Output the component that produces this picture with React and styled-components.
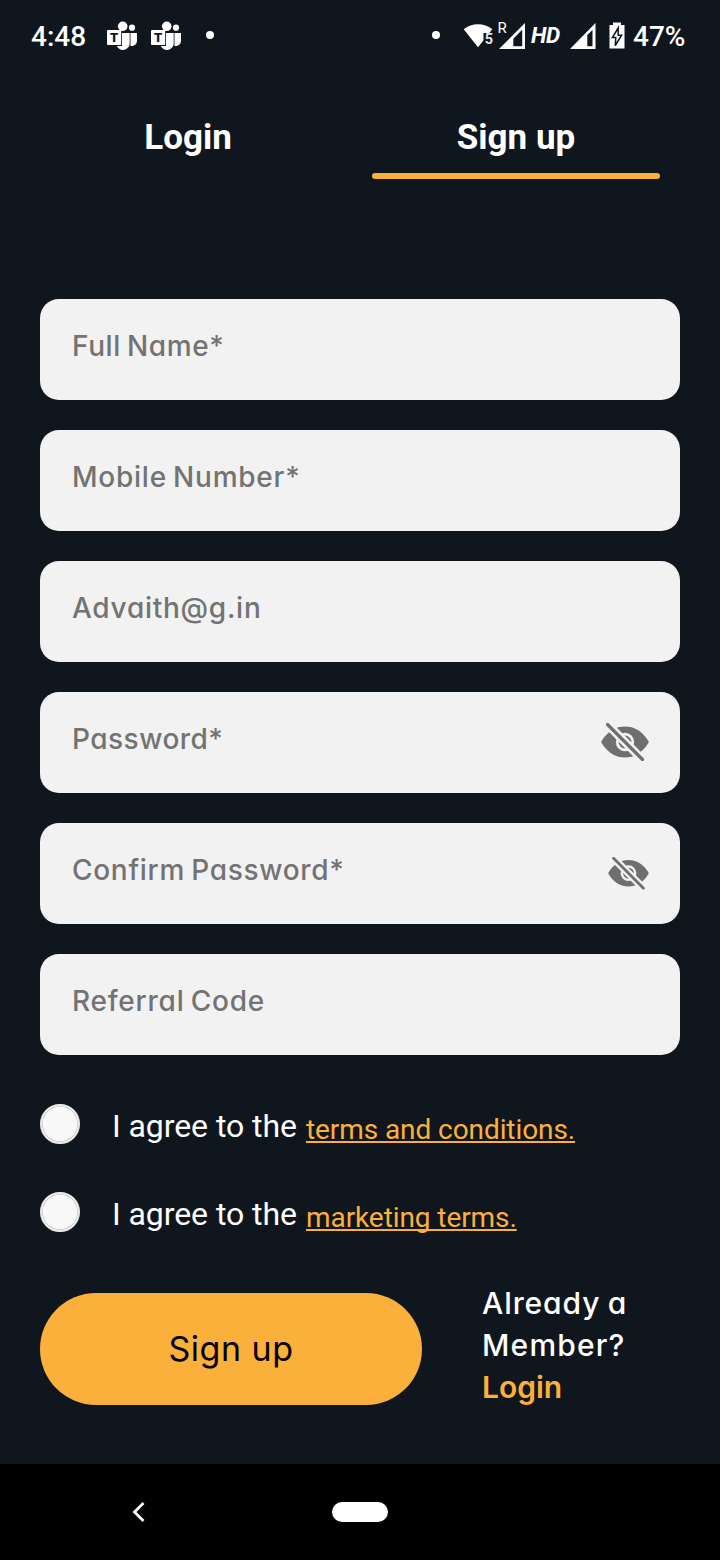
import React from 'react';
import styled, { createGlobalStyle } from 'styled-components';

const GlobalStyle = createGlobalStyle`
  * {
    box-sizing: border-box;
  }
  body {
    margin: 0;
    background: #0f161d;
  }
`;

const Screen = styled.div`
  width: 720px;
  height: 1560px;
  display: flex;
  flex-direction: column;
  background: #0f161d;
  color: #ffffff;
  font-family: Roboto, 'Liberation Sans', sans-serif;
  overflow: hidden;
`;

const StatusBar = styled.header`
  height: 72px;
  display: flex;
  align-items: center;
  justify-content: space-between;
  padding: 0 35px 0 31px;
  font-size: 28px;
  font-weight: 500;
  line-height: 36px;
`;

const StatusGroup = styled.div`
  display: flex;
  align-items: center;
`;

const StatusText = styled.span`
  white-space: nowrap;
  width: ${(p) => p.$width}px;
  margin-left: ${(p) => p.$gap || 0}px;
  padding-top: 2px;
`;

const StatusIcon = styled.svg`
  display: block;
  flex: none;
  overflow: visible;
  margin-left: ${(p) => p.$gap || 0}px;
`;

const Dot = styled.span`
  width: 8px;
  height: 8px;
  border-radius: 50%;
  background: #ffffff;
  margin: 0 0 2px ${(p) => p.$gap || 0}px;
`;

const HdText = styled.span`
  width: 30px;
  margin-left: 6px;
  padding-bottom: 2px;
  font-size: 22.5px;
  font-weight: 700;
  font-style: italic;
  letter-spacing: -0.4px;
  white-space: nowrap;
`;

const Tabs = styled.nav`
  display: flex;
  gap: 40px;
  padding: 46px 60px 0 44px;
`;

const Tab = styled.div`
  width: 288px;
  display: flex;
  flex-direction: column;
  align-items: center;
  font-size: 35px;
  font-weight: 700;
  line-height: 40px;
`;

const TabLine = styled.div`
  width: 288px;
  height: 6px;
  margin-top: 15px;
  border-radius: 3px;
  background: ${(p) => (p.$active ? '#fcb03c' : 'transparent')};
`;

const Form = styled.form`
  display: flex;
  flex-direction: column;
  gap: 30px;
  padding: 120px 40px 0;
  margin: 0;
`;

const Field = styled.div`
  height: 101px;
  border-radius: 19px;
  background: #f2f2f2;
  display: flex;
  align-items: center;
  justify-content: space-between;
  padding: 0 31px 0 32px;
`;

const Placeholder = styled.span`
  font-family: Inter, 'Open Sans', sans-serif;
  font-feature-settings: 'cv11';
  font-size: 28px;
  font-weight: 500;
  line-height: 36px;
  padding-bottom: 8px;
  letter-spacing: ${(p) => p.$spacing || 0}px;
  word-spacing: -2px;
  color: #737373;
  white-space: nowrap;
`;

const Agreements = styled.div`
  display: flex;
  flex-direction: column;
  gap: 48px;
  padding: 49px 40px 0;
`;

const Agreement = styled.div`
  height: 40px;
  display: flex;
  align-items: center;
`;

const Radio = styled.span`
  width: 40px;
  height: 40px;
  border-radius: 50%;
  border: 2px solid #e9ebeb;
  background: #f9f9f9;
  box-shadow: inset 0 0 0 0.6px #b4b6b7;
`;

const AgreeText = styled.span`
  width: 194px;
  margin-left: 32px;
  padding-top: 4px;
  font-size: 32px;
  line-height: 38px;
  letter-spacing: -0.07px;
  white-space: nowrap;
`;

const AgreeLink = styled.a`
  padding-top: 11px;
  font-size: 28px;
  line-height: 34px;
  color: #fcb03c;
  text-decoration: underline;
  text-decoration-thickness: 1.5px;
  text-underline-offset: 2px;
  text-decoration-skip-ink: none;
  letter-spacing: -0.08px;
  white-space: nowrap;
`;

const Actions = styled.div`
  display: flex;
  gap: 60px;
  padding: 61px 40px 0;
  font-family: Inter, 'Open Sans', sans-serif;
  font-feature-settings: 'cv11';
`;

const SubmitButton = styled.button`
  width: 382px;
  height: 112px;
  border: 0;
  border-radius: 56px;
  background: #fcb03c;
  color: #000000;
  font: inherit;
  font-feature-settings: inherit;
  font-size: 34px;
  letter-spacing: 0.5px;
  line-height: 40px;
  padding: 0;
`;

const Member = styled.div`
  display: flex;
  flex-direction: column;
  margin-top: -11px;
  font-size: 30px;
  line-height: 42px;
`;

const MemberLine = styled.span`
  letter-spacing: ${(p) => p.$spacing || 0}px;
  word-spacing: -1.5px;
  color: ${(p) => (p.$link ? '#fcb03c' : '#ffffff')};
  font-weight: ${(p) => (p.$link ? 600 : 500)};
  white-space: nowrap;
`;

const NavBar = styled.footer`
  height: 96px;
  margin-top: auto;
  background: #000000;
  display: flex;
  align-items: center;
  padding-left: 131px;
`;

const HomePill = styled.span`
  width: 56px;
  height: 20px;
  margin-left: 185px;
  border-radius: 10px;
  background: #ffffff;
`;

const TeamsIcon = ({ gap }) => (
  <StatusIcon $gap={gap} width="30" height="30" viewBox="0 0 30 30">
    <g fill="#ffffff">
      <circle cx="15.7" cy="5.3" r="4.8" />
      <circle cx="25" cy="6.7" r="3.1" />
      <path d="M15 12H22.7V22.5C22.7 26 19.5 29 16 29C13 29 10.8 27.3 9.8 25H15Z" />
      <path d="M23.5 12H30V19.5C30 22.5 28 25 24.5 25H23.5Z" />
      <rect x="0" y="9" width="14.2" height="15" rx="1" />
    </g>
    <text x="7" y="21" fill="#0f161d" fontSize="13" fontWeight="900" textAnchor="middle">
      T
    </text>
  </StatusIcon>
);

const WifiIcon = () => (
  <StatusIcon $gap={23} width="31" height="26" viewBox="0 0 31 26">
    <path d="M0.7 6.3C9 -0.4 21 -0.4 29.3 6.3L15 24.3Z" fill="#ffffff" />
    <path d="M20.5 10H31V26H20.5Z" fill="#0f161d" />
    <text x="25.8" y="21.2" fill="#e6e7e8" fontSize="14.5" fontWeight="700" textAnchor="middle">
      5
    </text>
  </StatusIcon>
);

const RoamingSignalIcon = () => (
  <StatusIcon $gap={1} width="30" height="28" viewBox="-3 0 30 28">
    <path
      d="M1 27H27V1ZM15.3 16.7V24.3H24.2V7.8Z"
      fill="#ffffff"
      fillRule="evenodd"
    />
    <text x="-0.6" y="11.3" fill="#ffffff" fontSize="15" fontWeight="400">
      R
    </text>
  </StatusIcon>
);

const SignalIcon = () => (
  <StatusIcon $gap={9} width="26" height="28" viewBox="0 0 26 28">
    <path
      d="M0 27H25.5V1ZM17.3 13V24.3H22.5V8Z"
      fill="#ffffff"
      fillRule="evenodd"
    />
  </StatusIcon>
);

const BatteryIcon = () => (
  <StatusIcon $gap={13} width="16" height="28" viewBox="0 0 16 28">
    <path d="M4 0.5H12V3H15.5V26.5H0.5V3H4Z" fill="#ffffff" />
    <path
      d="M9.2 6L3.4 15.5H6.8L6.2 23.5L12.6 13.2H9.2Z"
      fill="#ffffff"
      stroke="#0f161d"
      strokeWidth="1.5"
    />
  </StatusIcon>
);

const EyeSvg = styled.svg`
  display: block;
  flex: none;
  margin-bottom: ${(p) => p.$lift || 0}px;
`;

const EyeOffIcon = ({ width, lift }) => (
  <EyeSvg $lift={lift} width={width} height={(width * 38) / 48} viewBox="0 0 48 38">
    <path
      d="M0.8 20.2Q-0.2 19 0.8 17.8C7 8 14.5 3.5 24 3.5S41 8 47.2 17.8Q48.2 19 47.2 20.2C41 30 33.5 34.5 24 34.5S7 30 0.8 20.2Z"
      fill="#6f6f6f"
    />
    <circle cx="24" cy="19" r="9.2" fill="#f2f2f2" />
    <circle cx="24" cy="19" r="6.4" fill="#6f6f6f" />
    <path d="M2 -3L46 41" stroke="#f2f2f2" strokeWidth="8.6" />
    <path d="M6.5 1.5L41.5 36.5" stroke="#6f6f6f" strokeWidth="3.2" strokeLinecap="round" />
  </EyeSvg>
);

const fields = [
  { label: 'Full Name*', spacing: 0.6 },
  { label: 'Mobile Number*', spacing: 0.76 },
  { label: 'Advaith@g.in', spacing: 0.73 },
  { label: 'Password*', spacing: 0.48, eye: 48, lift: 1 },
  { label: 'Confirm Password*', spacing: 0.7, eye: 41 },
  { label: 'Referral Code', spacing: 0.76 },
];

const App = () => (
  <>
    <GlobalStyle />
    <Screen>
      <StatusBar>
        <StatusGroup>
          <StatusText $width={54}>4:48</StatusText>
          <TeamsIcon gap={22} />
          <TeamsIcon gap={14} />
          <Dot $gap={25} />
        </StatusGroup>
        <StatusGroup>
          <Dot />
          <WifiIcon />
          <RoamingSignalIcon />
          <HdText>HD</HdText>
          <SignalIcon />
          <BatteryIcon />
          <StatusText $width={52} $gap={8}>
            47%
          </StatusText>
        </StatusGroup>
      </StatusBar>
      <Tabs>
        <Tab>
          Login
          <TabLine />
        </Tab>
        <Tab>
          Sign up
          <TabLine $active />
        </Tab>
      </Tabs>
      <Form>
        {fields.map(({ label, spacing, eye, lift }) => (
          <Field key={label}>
            <Placeholder $spacing={spacing}>{label}</Placeholder>
            {eye && <EyeOffIcon width={eye} lift={lift} />}
          </Field>
        ))}
      </Form>
      <Agreements>
        <Agreement>
          <Radio />
          <AgreeText>I agree to the</AgreeText>
          <AgreeLink>terms and conditions.</AgreeLink>
        </Agreement>
        <Agreement>
          <Radio />
          <AgreeText>I agree to the</AgreeText>
          <AgreeLink>marketing terms.</AgreeLink>
        </Agreement>
      </Agreements>
      <Actions>
        <SubmitButton type="button">Sign up</SubmitButton>
        <Member>
          <MemberLine $spacing={0.9}>Already a</MemberLine>
          <MemberLine $spacing={1.2}>Member?</MemberLine>
          <MemberLine $link>Login</MemberLine>
        </Member>
      </Actions>
      <NavBar>
        <svg width="16" height="24" viewBox="0 0 16 24">
          <path d="M12.5 3L3.5 12L12.5 21" fill="none" stroke="#ffffff" strokeWidth="2.8" />
        </svg>
        <HomePill />
      </NavBar>
    </Screen>
  </>
);

export default App;
